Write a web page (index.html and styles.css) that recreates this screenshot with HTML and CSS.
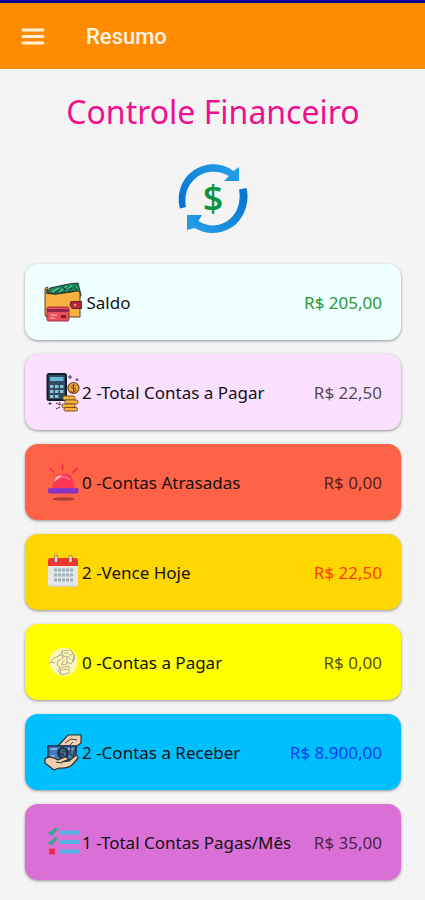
FILE: index.html
```html
<!DOCTYPE html>
<html lang="pt-BR">
  <head>
    <meta charset="utf-8">
    <meta name="viewport" content="width=device-width, initial-scale=1">
    <title>Resumo</title>
    <link rel="stylesheet" href="styles.css">
  </head>
  <body>
    <header class="topbar">
      <button type="button" class="menu" aria-label="Menu">
        <svg width="24" height="18" viewBox="0 0 24 18">
          <path d="M2 2h20M2 8.500h20M2 15h20" stroke="#fff0d8" stroke-width="3" stroke-linecap="round" />
        </svg>
      </button>
      <h1 class="screen-name">Resumo</h1>
    </header>

    <main class="content">
      <h2 class="title">Controle Financeiro</h2>

      <svg class="logo" width="72" height="72" viewBox="0 0 72 72">
        <defs>
          <linearGradient id="arcLeft" x1="0" y1="1" x2="1" y2="0">
            <stop offset="0" stop-color="#0670d2" />
            <stop offset="1" stop-color="#26a2e6" />
          </linearGradient>
          <linearGradient id="arcRight" x1="1" y1="0" x2="0" y2="1">
            <stop offset="0" stop-color="#0670d2" />
            <stop offset="1" stop-color="#26a2e6" />
          </linearGradient>
        </defs>
        <path d="M3 45.500C-0.500 34 3 18 14 9.500C27 -1.500 45 -1 56.500 8L62 4V18H47L52 13C42 7 28 7 19 15C10 22 7 33 9 44Z" fill="url(#arcLeft)" />
        <path d="M69.500 25C72.500 36 69 52 59 61C46 72.500 29 72 17.500 65L10 67V52H25L21.500 58C31 64.500 44 64 53 56C61 49 64 38 62 26.500Z" fill="url(#arcRight)" />
        <text x="36" y="48" class="logo-sign">$</text>
      </svg>

      <ul class="cards">
        <li class="card saldo">
          <svg class="icon" viewBox="0 0 38 40">
            <path d="M3 12L6 6L25 2L34 1L37 13L35 17H3Z" fill="#17875c" stroke="#20332b" stroke-width="1" />
            <path d="M8 10l7-4M15 10l8-6M22 10l6-7M28 11l5-6" stroke="#54bd8b" stroke-width="1.500" />
            <path d="M11 10l5-2M24 8l4-2M19 5l3 4M30 5l4 5" stroke="#0b4732" stroke-width="1.300" />
            <path d="M1 7Q1 5 4 5.500V10L11 12L34 9Q36 10 36 12V35H3Q1 35 1 32Z" fill="#f6b13f" stroke="#584029" stroke-width="1" />
            <path d="M3 7v4l8 1 20-3" fill="none" stroke="#263d35" stroke-width="1.500" />
            <path d="M27 19.500h11v7H28l-2-3.500z" fill="#b3263e" stroke="#701d2e" stroke-width="1" />
            <circle cx="31" cy="23" r="1.300" fill="#f59a52" />
            <rect x="3" y="25" width="22" height="14" rx="1.500" fill="#e94f5a" stroke="#9e2d40" stroke-width="1" />
            <rect x="3" y="27" width="22" height="3" fill="#962449" />
            <path d="M6 33h7M6 36h5" stroke="#ff9b98" stroke-width="1.300" />
            <rect x="17" y="33" width="5" height="3" fill="#711f37" />
          </svg>
          <span class="label">&nbsp;Saldo</span>
          <span class="value">R$ 205,00</span>
        </li>

        <li class="card total-pagar">
          <svg class="icon" viewBox="0 0 38 40">
            <rect x="3.500" y="2" width="18.500" height="26" rx="1.500" fill="#304b63" stroke="#161e29" stroke-width="2" />
            <rect x="6" y="5" width="13.500" height="4" fill="#67b8d1" />
            <path d="M6 13h3.500v3H6zM11 13h3.500v3H11zM16 13h3.500v3H16zM6 18h3.500v3H6zM11 18h3.500v3H11zM16 18h3.500v3H16zM6 23h3.500v3H6zM11 23h3.500v3H11z" fill="#8bc0d1" />
            <circle cx="29.500" cy="16" r="5.500" fill="#eea83d" stroke="#65431f" stroke-width="1.200" />
            <path d="M31.500 13.500q-4-1-4 1t2.500 1.500 1 3-4 0M29.500 12v8" fill="none" stroke="#764a22" stroke-width="1" />
            <g fill="#f5b641" stroke="#80511f" stroke-width="1">
              <rect x="19" y="24" width="12" height="4" rx="1.500" />
              <rect x="21" y="28" width="13" height="4" rx="1.500" />
              <rect x="18" y="32" width="13" height="3.500" rx="1.500" />
              <rect x="20" y="35.500" width="13.500" height="3.500" rx="1.500" />
            </g>
            <path d="M26 3v4M24 5h4M33 6v3M31.500 8h3M6 30v3M4.500 31.500h3M12 31l4 2M12 37l4-2M15 30l2 3" stroke="#41354a" stroke-width="1" />
          </svg>
          <span class="label">2 -Total Contas a Pagar</span>
          <span class="value">R$ 22,50</span>
        </li>

        <li class="card atrasadas">
          <svg class="icon" viewBox="0 0 38 40">
            <path d="M6.500 6.500l3 3.500M18.500 2.500v5M33 6.500l-4 4" stroke="#f92f4a" stroke-width="1.800" stroke-linecap="round" />
            <path d="M8 27L10 17Q12 12 17 12H22Q27 12 28.500 17L30.500 27Z" fill="#ff3557" />
            <path d="M10 20Q11 13 18 13Q15 17 10 20Z" fill="#ffc0bd" />
            <path d="M16 16q5-3 10 2" fill="none" stroke="#ff697a" stroke-width="2" />
            <rect x="4" y="26" width="30.500" height="5.500" rx="2" fill="#8431c4" />
            <path d="M6 27h26" stroke="#a140cc" stroke-width="1" />
            <ellipse cx="19.500" cy="37" rx="11" ry="1.800" fill="#ad3f32" />
          </svg>
          <span class="label">0 -Contas Atrasadas</span>
          <span class="value">R$ 0,00</span>
        </li>

        <li class="card vence">
          <svg class="icon" viewBox="0 0 38 40">
            <rect x="4" y="6" width="30" height="28.500" rx="2.500" fill="#e5e7e8" />
            <path d="M4 14V8.500Q4 6 6.500 6H31.500Q34 6 34 8.500V14Z" fill="#ef382d" />
            <path d="M12 5v4M26.500 5v4" stroke="#b72d27" stroke-width="4" stroke-linecap="round" />
            <path d="M12 5v4M26.500 5v4" stroke="#d4dadb" stroke-width="2.800" stroke-linecap="round" />
            <path d="M10 18h19M10 23h19M10 28h19" stroke="#9fb0b9" stroke-width="3.200" stroke-dasharray="3 1" />
            <path d="M5 34h28" stroke="#c7cbca" stroke-width="1" />
          </svg>
          <span class="label">2 -Vence Hoje</span>
          <span class="value">R$ 22,50</span>
        </li>

        <li class="card pagar">
          <svg class="icon" viewBox="0 0 38 40">
            <circle cx="19.500" cy="20" r="14" fill="#fff7ba" />
            <g fill="none" stroke="#b3ad88" stroke-width="1" stroke-linejoin="round">
              <path d="M5 22l5-6 5-2 3-5 9-1 3 5-1 7" />
              <path d="M14 14l4-1 1 3-5 3-1 4 3 2-2 4 3 3" />
              <path d="M18 9l1 5 5 1 4-3M23 15v7l-6 1 3-5" />
              <path d="M16 26l9-2v7l-8 2zM17 28l7-1M22 20l5 2 4-6-3-6" />
              <path d="M7 20l4 1M20 11h5M25 16l2 1M28 19l3-6" />
            </g>
          </svg>
          <span class="label">0 -Contas a Pagar</span>
          <span class="value">R$ 0,00</span>
        </li>

        <li class="card receber">
          <svg class="icon" viewBox="0 0 38 40">
            <path d="M14 14L24 3H37V11L33 14L30 24L25 23V14Z" fill="#efcfae" stroke="#30302f" stroke-width="1.200" stroke-linejoin="round" />
            <path d="M21 11l6-4 6 1M25 14l4-4" fill="none" stroke="#4a4440" stroke-width="1" />
            <path d="M4 14H32V28H4Z" fill="#4279bd" stroke="#202c45" stroke-width="1.500" />
            <path d="M7 17h6M24 17h5M7 24h4" stroke="#91c4e7" stroke-width="1.500" />
            <circle cx="19" cy="21" r="5" fill="#294266" stroke="#192437" stroke-width="1.500" />
            <path d="M21 18q-4-1-4 1t2.500 1.500 1 3-4 0" fill="none" stroke="#5f86a8" stroke-width="1" />
            <path d="M1 27Q4 24 10 26L14 28L21 25Q25 25 23 28L18 30L25 29L31 24Q34 23 34 26L28 33Q23 37 15 36L10 38L1 31Z" fill="#efcfae" stroke="#30302f" stroke-width="1.200" stroke-linejoin="round" />
            <path d="M12 30l6 1M27 15l-1 7 3 2 3-9" fill="none" stroke="#343536" stroke-width="1.200" />
          </svg>
          <span class="label">2 -Contas a Receber</span>
          <span class="value">R$ 8.900,00</span>
        </li>

        <li class="card pagas">
          <svg class="icon" viewBox="0 0 38 40">
            <path d="M16 10.500h19.500M16 20h19.500M16 29.500h19.500" stroke="#55b4e4" stroke-width="3.800" />
            <path d="M5 10l2.500 2L12.500 6M5 19.500l2.500 2L12.500 15.500" fill="none" stroke="#2aac8c" stroke-width="2.800" />
            <path d="M5.500 27l5 5M10.500 27l-5 5" stroke="#ed2440" stroke-width="2.800" />
          </svg>
          <span class="label">1 -Total Contas Pagas/Mês</span>
          <span class="value">R$ 35,00</span>
        </li>
      </ul>
    </main>
  </body>
</html>
```

FILE: styles.css
```css
* {
  box-sizing: border-box;
}
body {
  margin: 0;
  background-color: #f4f4f4;
  font-family: "Noto Sans", "Open Sans", sans-serif;
}
.topbar {
  display: flex;
  align-items: center;
  gap: 41px;
  padding: 2px 21px 0;
  height: 69px;
  border-top: 3px solid #0a0096;
  background-color: #ff8c00;
}
.menu {
  display: flex;
  padding: 0;
  border: 0;
  background: none;
}
.screen-name {
  margin: 0;
  color: #fff4e4;
  font-family: Roboto, sans-serif;
  font-size: 22px;
  font-weight: 500;
  line-height: 28px;
}
.content {
  display: flex;
  flex-direction: column;
  align-items: center;
  padding: 20px 24px 16px 25px;
}
.title {
  margin: 0;
  color: #ee1090;
  font-size: 32px;
  font-weight: 400;
  line-height: 46px;
}
.logo {
  margin: 28px 0 29px;
}
.logo-sign {
  fill: #0b9444;
  font-family: "Open Sans", sans-serif;
  font-size: 36px;
  font-weight: 600;
  text-anchor: middle;
}
.cards {
  display: flex;
  flex-direction: column;
  gap: 14px;
  width: 100%;
  margin: 0;
  padding: 0;
  list-style: none;
}
.card {
  display: flex;
  align-items: center;
  height: 76px;
  padding: 0 19px;
  border-radius: 13px;
  box-shadow: 0 1px 3px rgba(0, 0, 0, 0.4);
  font-size: 17px;
  line-height: 24px;
}
.icon {
  flex: none;
  width: 38px;
  height: 40px;
}
.label,
.value {
  padding-top: 2px;
  white-space: nowrap;
}
.label {
  color: #111;
}
.value {
  margin-left: auto;
  color: rgba(0, 0, 0, 0.7);
}
.saldo {
  background-color: #f0ffff;
}
.saldo .value {
  color: #2a9a2e;
}
.total-pagar {
  background-color: #fce0ff;
}
.atrasadas {
  background-color: #ff6347;
}
.vence {
  background-color: #ffd700;
}
.vence .value {
  color: #ff3a00;
}
.pagar {
  background-color: #ffff00;
}
.receber {
  background-color: #00bfff;
}
.receber .value {
  color: #0040ee;
}
.pagas {
  background-color: #da70d6;
}
```
